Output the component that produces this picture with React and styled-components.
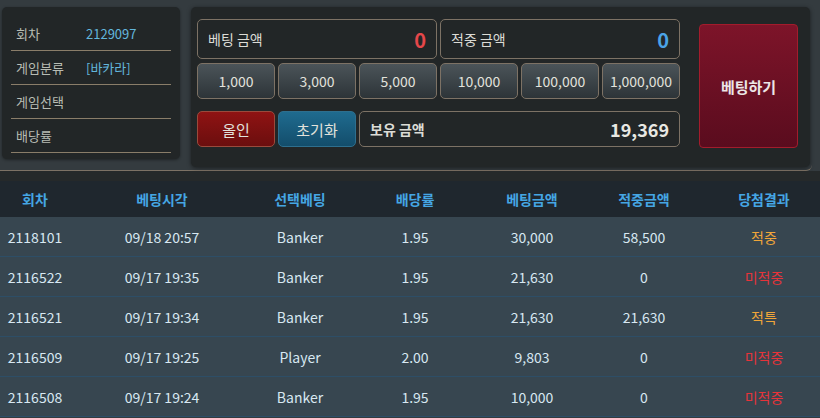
import React from 'react';
import styled, { createGlobalStyle } from 'styled-components';

const GlobalStyle = createGlobalStyle`
  html, body {
    margin: 0;
    padding: 0;
    background: #343b3f;
    font-family: "Noto Sans CJK KR", "Noto Sans", sans-serif;
  }
`

const Page = styled.div`
  width: 820px;
  height: 418px;
  overflow: hidden;
  display: flex;
  flex-direction: column;
`

const Top = styled.div`
  height: 171px;
  display: flex;
  align-items: flex-start;
  gap: 11px;
  padding: 7px 0 0 2px;
  box-sizing: border-box;
  border-bottom: 1px solid #7d7265;
  border-bottom-right-radius: 6px;
  width: 812px;
`

const InfoPanel = styled.div`
  width: 178px;
  height: 152px;
  box-sizing: border-box;
  padding: 10px 9px 0;
  background: #222627;
  border-radius: 5px;
  box-shadow: 0 1px 3px rgba(0, 0, 0, 0.4);
`

const InfoRow = styled.div`
  height: 33px;
  display: flex;
  align-items: center;
  border-bottom: 1px solid #8a7d69;
  padding-left: 5px;
  font-size: 13px;
`

const InfoLabel = styled.span`
  width: 70px;
  color: #b8bcb4;
`

const InfoValue = styled.span`
  color: #62b6dc;
`

const BetPanel = styled.div`
  width: 619px;
  height: 160px;
  box-sizing: border-box;
  padding: 12px 12px 0 6px;
  background: #222627;
  border-radius: 5px;
  box-shadow: 0 1px 4px rgba(0, 0, 0, 0.5);
  display: flex;
  gap: 19px;
`

const Grid = styled.div`
  width: 483px;
  display: grid;
  grid-template-columns: repeat(6, 1fr);
  grid-template-rows: 40px 36px 44px;
  column-gap: 3px;
  row-gap: 4px;
`

const AmountBox = styled.div`
  grid-column: span ${p => p.span};
  display: flex;
  align-items: center;
  justify-content: space-between;
  padding: 0 10px;
  border: 1px solid #7d7265;
  border-radius: 5px;
  background: #222627;
  color: #dcdcd6;
  font-size: 14px;
  font-weight: ${p => (p.bold ? 700 : 400)};
  align-self: end;
  height: ${p => (p.bold ? 36 : 40)}px;
  box-sizing: border-box;
`

const AmountValue = styled.span`
  font-size: ${p => p.size}px;
  font-weight: 700;
  color: ${p => p.color};
`

const Chip = styled.button`
  font-family: inherit;
  font-size: 14px;
  color: #e2e2dc;
  border: 1px solid #7d7265;
  border-radius: 5px;
  background: linear-gradient(#4b5459, #2d3438);
  padding: 0;
  height: 36px;
  align-self: end;
`

const ActionButton = styled(Chip)`
  background: ${p => p.bg};
  border-color: ${p => p.edge};
  font-size: 15px;
`

const BetButton = styled.button`
  margin-top: 5px;
  width: 99px;
  height: 124px;
  font-family: inherit;
  font-size: 15px;
  font-weight: 700;
  color: #ece6e6;
  border: 1px solid #a31c2c;
  border-radius: 4px;
  background: linear-gradient(#7d1429, #5a0c1e);
`

const Band = styled.div`
  height: 10px;
  background: #25292a;
`

const Cols = `
  display: grid;
  grid-template-columns: 70px 184px 92px 138px 96px 128px 112px;
  align-items: center;
  text-align: center;
`

const Head = styled.div`
  ${Cols}
  height: 36px;
  background: #1f272e;
  color: #45a6e4;
  font-weight: 700;
  font-size: 14px;
`

const Row = styled.div`
  ${Cols}
  height: 39px;
  border-bottom: 1px solid #2d4e67;
  background: #374650;
  color: #d8e8f2;
  font-size: 14px;
  flex-shrink: 0;
`

const Result = styled.span`
  color: ${p => (p.win ? '#f0a63a' : '#e5343a')};
`

const chips = ['1,000', '3,000', '5,000', '10,000', '100,000', '1,000,000'];

const history = [
  ['2118101', '09/18 20:57', 'Banker', '1.95', '30,000', '58,500', '적중'],
  ['2116522', '09/17 19:35', 'Banker', '1.95', '21,630', '0', '미적중'],
  ['2116521', '09/17 19:34', 'Banker', '1.95', '21,630', '21,630', '적특'],
  ['2116509', '09/17 19:25', 'Player', '2.00', '9,803', '0', '미적중'],
  ['2116508', '09/17 19:24', 'Banker', '1.95', '10,000', '0', '미적중'],
];

const App = () => {
  return (
    <Page>
      <GlobalStyle />
      <Top>
        <InfoPanel>
          <InfoRow><InfoLabel>회차</InfoLabel><InfoValue>2129097</InfoValue></InfoRow>
          <InfoRow><InfoLabel>게임분류</InfoLabel><InfoValue>[바카라]</InfoValue></InfoRow>
          <InfoRow><InfoLabel>게임선택</InfoLabel></InfoRow>
          <InfoRow><InfoLabel>배당률</InfoLabel></InfoRow>
        </InfoPanel>
        <BetPanel>
          <Grid>
            <AmountBox span={3}>베팅 금액<AmountValue size={20} color="#e5474a">0</AmountValue></AmountBox>
            <AmountBox span={3}>적중 금액<AmountValue size={20} color="#4ba3e6">0</AmountValue></AmountBox>
            {chips.map(c => <Chip key={c}>{c}</Chip>)}
            <ActionButton bg="linear-gradient(#8f1313, #6b0e0e)" edge="#9a4a3c">올인</ActionButton>
            <ActionButton bg="linear-gradient(#1f6b8f, #134d6b)" edge="#2e6f8e">초기화</ActionButton>
            <AmountBox span={4} bold>보유 금액<AmountValue size={18} color="#e8e8e2">19,369</AmountValue></AmountBox>
          </Grid>
          <BetButton>베팅하기</BetButton>
        </BetPanel>
      </Top>
      <Band />
      <Head>
        <span>회차</span><span>베팅시각</span><span>선택베팅</span><span>배당률</span>
        <span>베팅금액</span><span>적중금액</span><span>당첨결과</span>
      </Head>
      {history.map(r => (
        <Row key={r[0]}>
          {r.slice(0, 6).map((v, i) => <span key={i}>{v}</span>)}
          <Result win={r[6] !== '미적중'}>{r[6]}</Result>
        </Row>
      ))}
    </Page>
  );
}

export default App;
